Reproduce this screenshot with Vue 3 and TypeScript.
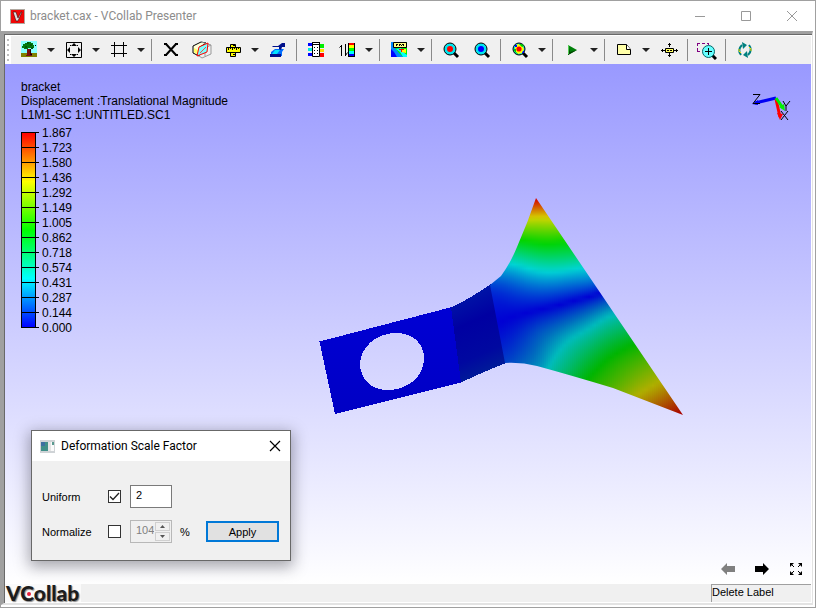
<script setup lang="ts">
import { ref } from 'vue'

interface Shape {
  d: string
  f?: string
  s?: string
  w?: number
}
interface Tool {
  label: string
  icon?: string
  menu?: boolean
  sep?: boolean
}

const uniform = ref(true)
const normalize = ref(false)
const factor = ref('2')
const percent = ref('104')

const disc = (cx: number, cy: number, r: number): string =>
  `M${cx - r} ${cy}a${r} ${r} 0 1 0 ${2 * r} 0a${r} ${r} 0 1 0 ${-2 * r} 0z`

const lens = (inner: Shape[]): Shape[] => [
  { d: 'M13 13l4 4', s: '#000', w: 3 },
  { d: disc(9, 9, 6), f: '#00e5ee', s: '#000', w: 1 },
  ...inner,
]

const icons: Record<string, Shape[]> = {
  tree: [
    { d: 'M2 1h16v12H2z', f: '#8ff' },
    { d: 'M2 13h16v4H2z', f: '#808000' },
    { d: 'M6 3h2v-1h4v1h2v2h1v3h-1v1h-2v-1h-3v1h-4v-1h-2v-2h1v-2h2z', f: '#007a10' },
    { d: 'M6 7h2M11 5h2M8 3h2M12 8h2', s: '#003800', w: 1 },
    { d: 'M8 9h4v4h1v3h-6v-1h1z', f: '#7a1010' },
    { d: 'M11.500 9v6', s: '#300', w: 1 },
    { d: 'M16 5h1v1h-1zM12 14h1v1h-1z', f: '#000' },
  ],
  fit: [
    { d: 'M2.500 2.500h15v15h-15z', s: '#000', w: 1 },
    { d: 'M10 3l3 3h-6zM10 17l3-3h-6zM3 10l3-3v6zM17 10l-3-3v6z', f: '#000' },
    { d: 'M6 5h1v1h-1zM13 5h1v1h-1zM6 14h1v1h-1zM13 14h1v1h-1z', f: '#000' },
  ],
  grid: [{ d: 'M2 5.500h16M2 13.500h16M5.500 2v15M14.500 2v15', s: '#000', w: 1 }],
  cross: [
    { d: 'M5 4l10 11M15 4l-10 11', s: '#000', w: 2 },
    { d: 'M3 3h3v2h-3zM14 3h3v2h-3zM3 14h3v2h-3zM14 14h3v2h-3z', f: '#000' },
  ],
  section: [
    { d: 'M1 6l8-4 5 1-6 4-1 9-6-3z', f: '#ffffd8', s: '#000', w: 1 },
    { d: 'M2 8l4 2v5l-4-3z', f: '#ff6' },
    { d: 'M9 2l10 3v9l-9 4-3-2M13 8l6-3M13 8v8', s: '#999', w: 1 },
    { d: 'M7 7l9-4-1 9-10 4z', f: '#7ff', s: '#f00', w: 1 },
    { d: 'M8 13l6-6', s: '#f44', w: 1 },
  ],
  ruler: [
    { d: 'M7.500 4.500h5v12h-5z', f: '#ff0', s: '#000', w: 1 },
    { d: 'M3.500 7.500h14v5h-14z', f: '#ff0', s: '#000', w: 1 },
    { d: 'M5.500 8v2M7.500 8v1M9.500 8v2M11.500 8v1M13.500 8v2M15.500 8v1M10 5.500h2M10 14.500h2', s: '#000', w: 1 },
  ],
  probe: [
    { d: 'M3 12l4-3h9l-2 3v4H3z', f: '#006cff' },
    { d: 'M2 14h11v3H2z', f: '#00108a' },
    { d: 'M7 10h5l-3 4H4z', f: '#00e5ff' },
    { d: 'M4 6h6l4-3h3v4h-3l-1 3-2-1v-2H5z', f: '#00108a' },
  ],
  nodes: [
    { d: 'M2 3h4v3h-4zM2 13h4v3h-4z', f: '#00f' },
    { d: 'M2 8h4v3h-4z', f: '#0ed' },
    { d: 'M14 4h4v4h-4z', f: '#0e0' },
    { d: 'M14 9h4v3h-4z', f: '#fd0' },
    { d: 'M14 13h4v4h-4z', f: '#f00' },
    { d: 'M6.500 2.500h7v14h-7z', f: '#fff', s: '#000', w: 1 },
    { d: 'M6 2.500h8M6 4.500h8M8 7.500h1M11 7.500h1M8 10.500h1M11 10.500h1M8 13.500h1M11 13.500h1', s: '#000', w: 1 },
  ],
  range: [
    { d: 'M4.500 5v11M8.500 4v12', s: '#000', w: 1 },
    { d: 'M2.500 7.500l2-2M10.500 12.500l-2 3', s: '#000', w: 1 },
    { d: 'M11 3h7v14h-7z', f: '#000' },
    { d: 'M12 3h5v2h-5z', f: '#f00' },
    { d: 'M12 5h5v3h-5z', f: '#ff0' },
    { d: 'M12 8h5v3h-5z', f: '#0f0' },
    { d: 'M12 11h5v3h-5z', f: '#0ff' },
    { d: 'M12 14h5v2h-5z', f: '#00f' },
  ],
  contour: [
    { d: 'M2 2h16v15H2z', f: '#0e0' },
    { d: 'M2 2h4v6l4 5 4 4H2z', f: '#08f' },
    { d: 'M2 9l3 3 3 5H2z', f: '#00f' },
    { d: 'M7 9l4 3 3 5h4v-2l-5-4-1-3z', f: '#0ff' },
    { d: 'M12 9h5v4l-5-1z', f: '#ff0' },
    { d: 'M10 9h5v1h-2v2h-1v-2h-2z', f: '#f00' },
    { d: 'M4.500 2.500h13v5h-13z', f: '#ffff80', s: '#000', w: 1 },
    { d: 'M7 4.500h2M10 4.500h2M13 4.500h2M7 5.500h1M10 5.500h1M12 5.500h1M14 5.500h1', s: '#000', w: 1 },
  ],
  maxSpot: lens([{ d: disc(9, 9, 3), f: '#f00' }]),
  minSpot: lens([{ d: disc(9, 9, 3), f: '#00f' }]),
  hotSpot: lens([
    { d: 'M5 6l3-2 4 1 2 4-2 4-4 1-3-3z', f: '#ff0' },
    { d: 'M4 9h2v3l2 2H7l-3-3zM9 4h3l2 2-2 1z', f: '#0c0' },
    { d: 'M5 5h2v2h-2zM13 11h1v2h-2z', f: '#00f' },
    { d: disc(9, 9, 2.6), f: '#f00' },
  ]),
  play: [
    { d: 'M6 5l9 5-9 5z', f: '#00800a' },
    { d: 'M6 5v10l9-5-7 2z', f: '#004400' },
    { d: 'M6.500 5v9', s: '#5c5', w: 1 },
  ],
  note: [
    { d: 'M3.500 4.500h9l4 5v5h-13z', f: '#ffffa8', s: '#000', w: 1 },
    { d: 'M12.500 4.500v5h4', f: '#fff', s: '#000', w: 1 },
  ],
  move: [
    { d: 'M6.500 8.500h8v4h-8z', f: '#ffff60', s: '#000', w: 1 },
    { d: 'M8 10.500h2M11 10.500h2', s: '#000', w: 1 },
    { d: 'M10.500 3v4M10.500 13v4M2 10.500h4M15 10.500h4', s: '#000', w: 1 },
    { d: 'M9 4.500h3M9 15.500h3M3.500 9v3M17.500 9v3', s: '#000', w: 1 },
  ],
  zoomArea: [
    { d: 'M0 3.500h3M5 3.500h3M10 3.500h2M.500 3v3M.500 8v3M0 11.500h3M11.500 3v2', s: '#800080', w: 1 },
    { d: 'M15 15l4 4', s: '#000', w: 3 },
    { d: disc(11.5, 11.5, 6), f: '#6ff', s: '#066', w: 1 },
    { d: 'M8 11.500h7M11.500 8v7', s: '#000', w: 1 },
  ],
  refresh: [
    { d: 'M6 15q-4-5 1-10M14 5q4 5-1 10', s: '#008080', w: 2 },
    { d: 'M7 2l5 3-4 4zM13 18l-5-3 4-4z', f: '#008080' },
    { d: 'M14 7l2 2v2M6 13l-2-2v-2', s: '#f0e000', w: 1 },
  ],
}

const tools: Tool[] = [
  { label: 'Background', icon: 'tree', menu: true },
  { label: 'Fit view', icon: 'fit', menu: true },
  { label: 'Grid', icon: 'grid', menu: true },
  { label: 's1', sep: true },
  { label: 'Explode', icon: 'cross' },
  { label: 'Section', icon: 'section' },
  { label: 'Measure', icon: 'ruler', menu: true },
  { label: 'Probe', icon: 'probe' },
  { label: 's2', sep: true },
  { label: 'Node labels', icon: 'nodes' },
  { label: 'Legend range', icon: 'range', menu: true },
  { label: 's3', sep: true },
  { label: 'Contour', icon: 'contour', menu: true },
  { label: 's4', sep: true },
  { label: 'Maximum', icon: 'maxSpot' },
  { label: 'Minimum', icon: 'minSpot' },
  { label: 's5', sep: true },
  { label: 'Hot spots', icon: 'hotSpot', menu: true },
  { label: 's6', sep: true },
  { label: 'Animate', icon: 'play', menu: true },
  { label: 's7', sep: true },
  { label: 'Note', icon: 'note', menu: true },
  { label: 'Move label', icon: 'move' },
  { label: 's8', sep: true },
  { label: 'Zoom area', icon: 'zoomArea' },
  { label: 's9', sep: true },
  { label: 'Refresh', icon: 'refresh' },
]

const levels = ['1.867', '1.723', '1.580', '1.436', '1.292', '1.149', '1.005', '0.862', '0.718', '0.574', '0.431', '0.287', '0.144', '0.000']

// Signed displacement at sample nodes of the flange: x, y, share of the maximum.
const nodes: number[][] = [
  [536, 199, 1], [533, 214, 0.8], [538, 220, 0.72], [542, 227, 0.65],
  [525, 241, 0.5], [546, 246, 0.48], [563, 242, 0.5], [523, 253, 0.38],
  [547, 258, 0.37], [570, 255, 0.39], [512, 264, 0.25], [540, 271, 0.25],
  [580, 268, 0.25], [500, 278, 0.13], [530, 284, 0.14], [567, 281, 0.16],
  [589, 279, 0.16], [491, 287, 0.07], [500, 323, 0], [523, 314, 0],
  [547, 308, 0], [570, 302, 0], [595, 295, 0], [507, 361, -0.08],
  [527, 363, -0.14], [543, 365, -0.2], [552, 364, -0.26], [570, 340, -0.25],
  [590, 328, -0.25], [610, 316, -0.25], [567, 367, -0.34], [590, 347, -0.36],
  [620, 329, -0.36], [590, 377, -0.5], [607, 360, -0.5], [629, 345, -0.49],
  [613, 383, -0.6], [643, 360, -0.6], [630, 387, -0.68], [653, 375, -0.7],
  [640, 393, -0.75], [653, 390, -0.77], [667, 400, -0.87], [682, 414, -1],
  [540, 330, -0.1], [557, 320, -0.09],
]

const kernel = (dx: number, dy: number): number => {
  const r2 = (dx * dx + dy * dy) / 10000
  return r2 > 0 ? r2 * Math.log(r2) : 0
}

// Thin plate spline through the nodes, with slight smoothing.
function fitSurface(points: number[][]): (x: number, y: number) => number {
  const n = points.length
  const size = n + 3
  const m = Array.from({ length: size }, () => new Array<number>(size + 1).fill(0))
  points.forEach((p, i) => {
    points.forEach((q, j) => {
      m[i][j] = kernel(p[0] - q[0], p[1] - q[1]) + (i === j ? 0.01 : 0)
    })
    const basis = [1, p[0] / 100, p[1] / 100]
    basis.forEach((b, k) => {
      m[i][n + k] = b
      m[n + k][i] = b
    })
    m[i][size] = p[2]
  })
  for (let c = 0; c < size; c++) {
    let best = c
    for (let r = c + 1; r < size; r++) if (Math.abs(m[r][c]) > Math.abs(m[best][c])) best = r
    const swap = m[c]
    m[c] = m[best]
    m[best] = swap
    for (let r = 0; r < size; r++) {
      if (r === c) continue
      const k = m[r][c] / m[c][c]
      if (k !== 0) for (let j = c; j <= size; j++) m[r][j] -= k * m[c][j]
    }
  }
  const w = m.map((row, i) => row[size] / row[i])
  return (x, y) =>
    points.reduce((sum, p, i) => sum + w[i] * kernel(x - p[0], y - p[1]), w[n] + (w[n + 1] * x) / 100 + (w[n + 2] * y) / 100)
}

const field = fitSurface(nodes)

function shade(x: number, y: number): string {
  const value = field(x, y)
  const t = Math.min(1, Math.abs(value)) * 4
  const below = Math.max(0, -value)
  const light = 255 * (0.83 - Math.min(0.07, below / 2) - below / 10)
  const band = (v: number): number => Math.round(light * Math.min(1, Math.max(0, v)))
  return `rgb(${band(t - 2)},${band(Math.min(t, 4 - t))},${band(2 - t)})`
}

const stripTop = 196
const stripHeight = 222
const strips = Array.from({ length: 98 }, (_, i) => {
  const x = 488 + i * 2
  const stops = Array.from({ length: 56 }, (_, k) => ({
    at: k / 55,
    color: shade(x + 1, stripTop + (stripHeight * k) / 55),
  }))
  return { x, id: `strip${i}`, stops }
})
</script>

<template>
  <div class="window">
    <header class="titlebar">
      <svg class="app-icon" width="15" height="15" viewBox="0 0 15 15" aria-hidden="true">
        <path d="M0 0h15v15H0z" fill="#b0a8a0" />
        <path d="M1 1h13v13H1z" fill="#f00808" />
        <path d="M3 3h3l2 6 3-6h1l-4 9h-2z" fill="#ddd" stroke="#400" stroke-width=".6" />
      </svg>
      <h1>bracket.cax - VCollab Presenter</h1>
      <div class="window-buttons">
        <button type="button" aria-label="Minimize">
          <svg width="12" height="12" viewBox="0 0 12 12"><path d="M1 6.500h10" /></svg>
        </button>
        <button type="button" aria-label="Maximize">
          <svg width="12" height="12" viewBox="0 0 12 12"><path d="M1.500 1.500h9v9h-9z" /></svg>
        </button>
        <button type="button" aria-label="Close">
          <svg width="12" height="12" viewBox="0 0 12 12"><path d="M1 1l10 10M11 1L1 11" /></svg>
        </button>
      </div>
    </header>

    <div class="frame">
      <nav class="toolbar" aria-label="Tools">
        <span class="grip"></span>
        <template v-for="tool in tools" :key="tool.label">
          <span v-if="tool.sep" class="sep"></span>
          <div v-else class="tool">
            <button type="button" class="tool-main" :aria-label="tool.label">
              <svg width="20" height="20" viewBox="0 0 20 20">
                <path
                  v-for="(shape, i) in icons[tool.icon ?? 'grid']"
                  :key="i"
                  :d="shape.d"
                  :fill="shape.f ?? 'none'"
                  :stroke="shape.s ?? 'none'"
                  :stroke-width="shape.w ?? 0"
                />
              </svg>
            </button>
            <button v-if="tool.menu" type="button" class="tool-menu" :aria-label="tool.label + ' menu'">
              <svg width="8" height="4" viewBox="0 0 8 4"><path d="M0 0h8L4 4z" fill="#222" /></svg>
            </button>
          </div>
        </template>
      </nav>

      <main class="viewport">
        <svg class="model" viewBox="5 64 806 520" aria-label="Bracket model">
          <defs>
            <linearGradient v-for="s in strips" :id="s.id" :key="s.id" x1="0" y1="0" x2="0" y2="1">
              <stop v-for="(stop, k) in s.stops" :key="k" :offset="stop.at" :stop-color="stop.color" />
            </linearGradient>
            <linearGradient id="bend" x1="0" y1="0" x2="0.25" y2="1">
              <stop offset="0.1" stop-color="#001aa8" />
              <stop offset="0.45" stop-color="#0000a2" />
              <stop offset="0.8" stop-color="#0008a0" />
              <stop offset="1" stop-color="#001c98" />
            </linearGradient>
            <linearGradient id="plate" x1="0" y1="0" x2="0" y2="1">
              <stop offset="0" stop-color="#0000d4" />
              <stop offset="1" stop-color="#0000c4" />
            </linearGradient>
            <clipPath id="flange">
              <path d="M490 285L501 276Q510 264 517 247Q528 222 536 198L683 415L613 388Q570 375 537 366Q521 362 505 363Z" />
            </clipPath>
          </defs>
          <path
            d="M319.500 341.500L452 307L461 382.500L335 414ZM360 363C361 348 375 333 396 333C414 333 424 344 424 359C424 377 407 390 388 390C371 390 360 379 360 363Z"
            fill="url(#plate)" fill-rule="evenodd" shape-rendering="crispEdges"
          />
          <path d="M451 307.500Q471 298 491 284L506 363Q485 371 461 382.500Z" fill="url(#bend)" shape-rendering="crispEdges" />
          <g clip-path="url(#flange)">
            <rect
              v-for="s in strips" :key="s.id" :x="s.x" :y="stripTop" width="2" :height="stripHeight"
              :fill="`url(#${s.id})`" shape-rendering="crispEdges"
            />
          </g>
        </svg>

        <section class="legend" aria-label="Result legend">
          <p>bracket</p>
          <p>Displacement :Translational Magnitude</p>
          <p>L1M1-SC 1:UNTITLED.SC1</p>
          <div class="scale">
            <div class="bar"></div>
            <ol class="levels">
              <li v-for="level in levels" :key="level">{{ level }}</li>
            </ol>
          </div>
        </section>

        <svg class="axes" width="44" height="32" viewBox="0 0 44 32" aria-label="Axes">
          <path d="M26 5L5 10" stroke="#0000f4" stroke-width="3" />
          <path d="M2 11l6-4v5z" fill="#0000f4" />
          <path d="M26 6l4 18" stroke="#f00" stroke-width="3" />
          <path d="M27 20l6 1-3 6z" fill="#f00" />
          <path d="M26 5l7 10" stroke="#00f000" stroke-width="3" />
          <path d="M29 14l5-3 1 7z" fill="#00f000" />
          <path d="M3 1.500h7L3 10.500h7" class="axis-name" />
          <path d="M33 8l3 5v5M40 8l-4 5" class="axis-name" />
          <path d="M31 18l7 9M38 18l-7 9" class="axis-name" />
        </svg>

        <form class="dialog" role="dialog" aria-labelledby="dialog-title" @submit.prevent>
          <div class="dialog-head">
            <svg width="15" height="13" viewBox="0 0 15 13" aria-hidden="true">
              <path d="M0 0h15v13H0z" fill="#cfd3d6" />
              <path d="M1 2h7v9H1z" fill="#3f8f88" />
              <path d="M1 2h4v4H1z" fill="#3b6fa0" />
              <path d="M8 2h3v9H8z" fill="#e4e4e4" />
              <path d="M11 2h3v9h-3z" fill="#fafafa" />
              <path d="M12 2h2v3h-2z" fill="#5a9a90" />
            </svg>
            <h2 id="dialog-title">Deformation Scale Factor</h2>
            <button type="button" class="dialog-close" aria-label="Close dialog">
              <svg width="12" height="12" viewBox="0 0 12 12"><path d="M1 1l10 10M11 1L1 11" stroke="#000" stroke-width="1.200" /></svg>
            </button>
          </div>
          <div class="dialog-body">
            <label for="uniform">Uniform</label>
            <span class="check">
              <input id="uniform" v-model="uniform" type="checkbox" />
              <svg v-if="uniform" width="13" height="13" viewBox="0 0 13 13"><path d="M2 6.500l3 3L11 3" fill="none" stroke="#222" stroke-width="1.300" /></svg>
            </span>
            <input v-model="factor" class="field" type="text" aria-label="Uniform factor" />
            <span></span>
            <span></span>
            <label for="normalize">Normalize</label>
            <span class="check">
              <input id="normalize" v-model="normalize" type="checkbox" />
              <svg v-if="normalize" width="13" height="13" viewBox="0 0 13 13"><path d="M2 6.500l3 3L11 3" fill="none" stroke="#222" stroke-width="1.300" /></svg>
            </span>
            <div class="spin">
              <input id="percent" v-model="percent" type="text" :disabled="!normalize" />
              <div class="spin-buttons">
                <button type="button" :disabled="!normalize" aria-label="Increase"><svg width="5" height="3" viewBox="0 0 5 3"><path d="M0 3h5L2.500 0z" fill="#555" /></svg></button>
                <button type="button" :disabled="!normalize" aria-label="Decrease"><svg width="5" height="3" viewBox="0 0 5 3"><path d="M0 0h5L2.500 3z" fill="#555" /></svg></button>
              </div>
            </div>
            <label for="percent">%</label>
            <button type="submit" class="apply">Apply</button>
          </div>
        </form>

        <div class="pager">
          <button type="button" aria-label="Previous">
            <svg width="14" height="12" viewBox="0 0 14 12"><path d="M0 6l6-6v3h8v6H6v3z" fill="#808080" /></svg>
          </button>
          <button type="button" aria-label="Next">
            <svg width="14" height="12" viewBox="0 0 14 12"><path d="M14 6L8 0v3H0v6h8v3z" fill="#000" /></svg>
          </button>
          <button type="button" aria-label="Full screen">
            <svg width="14" height="12" viewBox="0 0 14 12">
              <path d="M1 0h4l-4 4zM13 0v4l-4-4zM1 12v-4l4 4zM13 12h-4l4-4z" fill="#000" />
              <path d="M2 1l3 3M12 1l-3 3M2 11l3-3M12 11l-3-3" stroke="#000" />
            </svg>
          </button>
        </div>
      </main>

      <footer class="status">
        <div class="brand">VCollab<i></i></div>
        <div class="status-panel">Delete Label</div>
      </footer>
    </div>
  </div>
</template>

<style>
body {
  background: #fff;
}
</style>

<style scoped>
.window {
  box-sizing: border-box;
  display: flex;
  flex-direction: column;
  min-height: 100vh;
  border: 1px solid #a0a0a0;
  background: #fff;
  font-family: "Noto Sans", sans-serif;
}
button {
  padding: 0;
  border: 0;
  background: none;
  font: inherit;
}
svg {
  display: block;
}
h1,
h2,
p,
ol {
  margin: 0;
  padding: 0;
  font-weight: 400;
}
.titlebar {
  display: flex;
  align-items: center;
  height: 30px;
  padding-left: 9px;
  color: #8c8c8c;
}
.titlebar h1 {
  flex: 1;
  margin-left: 5px;
  font: 12px/16px Roboto, sans-serif;
}
.window-buttons {
  display: flex;
}
.window-buttons button {
  display: grid;
  place-items: center;
  width: 46px;
  height: 30px;
}
.window-buttons path {
  fill: none;
  stroke: #999;
}
.frame {
  display: flex;
  flex: 1;
  flex-direction: column;
  margin-right: 2px;
  margin-bottom: 2px;
  border-top: 3px solid #a0a0a0;
  border-left: 3px solid #a0a0a0;
  border-right: 1px solid #e3e3e3;
  border-bottom: 2px solid #e3e3e3;
  box-shadow: inset 1px 1px #696969;
  padding: 2px 1px 1px 1px;
}
.toolbar {
  display: flex;
  align-items: center;
  gap: 1px;
  height: 28px;
  padding-left: 1px;
  background: linear-gradient(90deg, #fff 6px, #f0f0f0 6px);
}
.grip {
  width: 2px;
  height: 22px;
  margin: 0 4px 0 1px;
  background: repeating-linear-gradient(#bdbdbd 0 2px, #fff 2px 5px);
}
.tool {
  display: flex;
}
.tool button {
  display: grid;
  place-items: center;
  height: 26px;
}
.tool-main {
  width: 30px;
}
.tool-menu {
  width: 14px;
}
.sep {
  width: 1px;
  height: 22px;
  margin: 0 3px 0 2px;
  background: #8a8a8a;
}
.viewport {
  position: relative;
  flex: 1;
  min-height: 518px;
  background: linear-gradient(#9999ff, #fff);
}
.model {
  position: absolute;
  inset: 0;
  width: 100%;
  height: 100%;
}
.legend {
  position: absolute;
  top: 16px;
  left: 16px;
  color: #000;
  font: 12px/14px "Liberation Sans", Arial, sans-serif;
}
.scale {
  display: flex;
  margin-top: 3px;
}
.bar {
  box-sizing: border-box;
  width: 15px;
  height: 196px;
  margin-top: 7px;
  border: 1px solid #000;
  background: linear-gradient(#f00, #ff0 25%, #0f0 50%, #0ff 75%, #00f);
}
.levels {
  list-style: none;
}
.levels li {
  display: flex;
  align-items: center;
  gap: 3px;
  height: 15px;
}
.levels li::before {
  width: 18px;
  height: 1px;
  margin-left: -15px;
  background: #000;
  content: "";
}
.axes {
  position: absolute;
  top: 29px;
  right: 17px;
}
.axis-name {
  fill: none;
  stroke: #000;
}
.dialog {
  position: absolute;
  bottom: 23px;
  left: 26px;
  width: 258px;
  border: 1px solid #686868;
  background: #f0f0f0;
  box-shadow: 0 4px 14px 2px rgba(40, 40, 50, 0.4);
  color: #000;
}
.dialog-head {
  display: flex;
  align-items: center;
  height: 30px;
  padding: 0 9px 0 8px;
  background: #fff;
}
.dialog-head h2 {
  flex: 1;
  margin-left: 6px;
  font: 12px/16px Roboto, sans-serif;
}
.dialog-body {
  display: grid;
  grid-template-columns: 66px 22px 42px 34px 73px;
  grid-template-rows: 23px 23px;
  align-items: center;
  row-gap: 12px;
  padding: 24px 10px 17px;
  font: 11px/14px "Liberation Sans", Arial, sans-serif;
}
.dialog-body label[for="percent"] {
  padding-left: 8px;
}
.check {
  position: relative;
  width: 13px;
  height: 13px;
}
.check input {
  display: block;
  box-sizing: border-box;
  width: 13px;
  height: 13px;
  margin: 0;
  border: 1px solid #333;
  background: #fff;
  appearance: none;
}
.check svg {
  position: absolute;
  inset: 0;
  pointer-events: none;
}
.field {
  box-sizing: border-box;
  width: 42px;
  height: 23px;
  padding: 0 5px 3px;
  border: 1px solid #7a7a7a;
  border-radius: 0;
  background: #fff;
  font: inherit;
}
.spin {
  box-sizing: border-box;
  display: flex;
  width: 42px;
  height: 23px;
  border: 1px solid #b8b8b8;
}
.spin input {
  flex: 1;
  min-width: 0;
  padding: 0 0 3px 5px;
  border: 0;
  background: #f0f0f0;
  color: #808080;
  font: inherit;
}
.spin-buttons {
  display: grid;
  gap: 1px;
  width: 15px;
  padding: 1px;
}
.spin-buttons button {
  display: grid;
  place-items: center;
  border: 1px solid #d0d0d0;
}
.apply {
  height: 21px;
  border: 2px solid #0078d7;
  background: #e1e1e1;
}
.pager {
  position: absolute;
  right: 8px;
  bottom: 9px;
  display: flex;
  gap: 20px;
}
.status {
  display: flex;
  justify-content: space-between;
  height: 18px;
  background: #f0f0f0;
}
.brand {
  position: relative;
  box-sizing: border-box;
  width: 76px;
  padding-left: 1px;
  background: #fafafa;
  color: #1c1c1c;
  font: 900 21px/18px Lato, sans-serif;
  text-shadow: 1px 1px 1px #888;
  white-space: nowrap;
}
.brand i {
  position: absolute;
  top: 8px;
  left: 22px;
  width: 4px;
  height: 4px;
  border-radius: 50%;
  background: #e8203c;
}
.status-panel {
  box-sizing: border-box;
  width: 100px;
  border-top: 1px solid #a0a0a0;
  border-left: 1px solid #a0a0a0;
  font: 11px/15px "Liberation Sans", Arial, sans-serif;
}
</style>
